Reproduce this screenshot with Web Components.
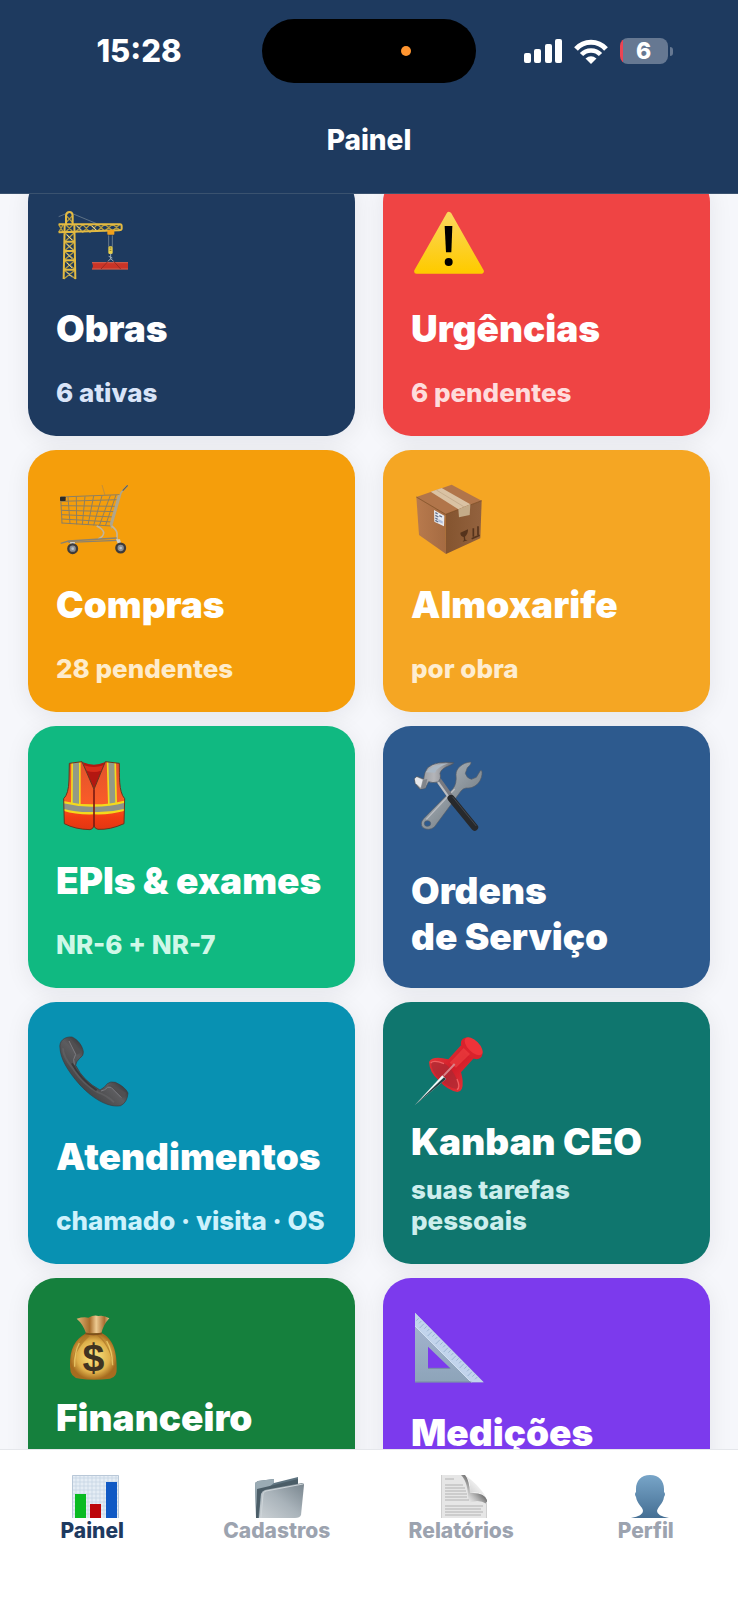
<!DOCTYPE html>
<html lang="pt-BR">
<head>
<meta charset="UTF-8">
<meta name="viewport" content="width=device-width, initial-scale=1">
<title>Painel</title>
<style>
    body {
        margin: 0;
        font-family: Inter, "Liberation Sans", sans-serif;
    }
</style>
</head>
<body>
<painel-app>
    <status-bar slot="header" time="15:28" battery="6"></status-bar>
    <app-title slot="header">Painel</app-title>

    <menu-card href="#obras" icon="crane" color="#1e3a5f" sub-color="#d9e4f8">Obras<span slot="sub">6 ativas</span></menu-card>
    <menu-card href="#urgencias" icon="warning" color="#ef4444" sub-color="#fedcdc">Urgências<span slot="sub">6 pendentes</span></menu-card>
    <menu-card href="#compras" icon="cart" color="#f59e0b" sub-color="#feeccb">Compras<span slot="sub">28 pendentes</span></menu-card>
    <menu-card href="#almoxarife" icon="box" color="#f5a623" sub-color="#feedd0">Almoxarife<span slot="sub">por obra</span></menu-card>
    <menu-card href="#epis" icon="vest" color="#10b981" sub-color="#cff8e8">EPIs &amp; exames<span slot="sub">NR-6 + NR-7</span></menu-card>
    <menu-card href="#ordens" icon="tools" color="#2d5a8e" lines="0">Ordens<br>de Serviço</menu-card>
    <menu-card href="#atendimentos" icon="phone" color="#0891b2" sub-color="#cdf2fc">Atendimentos<span slot="sub">chamado · visita · OS</span></menu-card>
    <menu-card href="#kanban" icon="pin" color="#0f766e" sub-color="#cdeeed">Kanban CEO<span slot="sub">suas tarefas pessoais</span></menu-card>
    <menu-card href="#financeiro" icon="money" color="#15803d" lines="2">Financeiro</menu-card>
    <menu-card href="#medicoes" icon="ruler" color="#7c3aed">Medições</menu-card>

    <tab-item slot="tabs" href="#painel" icon="chart" active>Painel</tab-item>
    <tab-item slot="tabs" href="#cadastros" icon="folder">Cadastros</tab-item>
    <tab-item slot="tabs" href="#relatorios" icon="page">Relatórios</tab-item>
    <tab-item slot="tabs" href="#perfil" icon="person">Perfil</tab-item>
</painel-app>

<script>
// Desenhos dos ícones, cada um com o seu viewBox
const ICONS = {
    crane: {
        box: '108 36 228 237',
        art: `
            <g fill="none" stroke="#7d8d97" stroke-width="2"><path d="M148 67L116 80M148 67L230 101"/></g>
            <g fill="none" stroke="#b79d3d" stroke-width="4">
                <path d="M138 76L158 98M158 76L138 98M134 128L163 155M163 128L134 155M133 155L164 183M164 155L133 183M132 183L165 211M165 183L132 211M132 211L166 239M166 211L132 239M131 239L167 267M167 239L131 267"/>
                <path d="M116 103L130 127M130 103L116 127M166 103L188 127M188 103L166 127M188 103L210 127M210 103L188 127M210 103L232 124M232 103L210 127M232 103L254 123M254 103L232 124M254 103L278 122M278 103L254 123M278 103L300 121M300 103L278 122M136 103L160 127M160 103L136 127"/>
            </g>
            <g fill="none" stroke="#e3ba42" stroke-width="6">
                <path d="M116 103H300Q305 103 305 109V117Q304 121 298 121L116 127M138 103V76Q140 66 148 66Q157 66 158 76V103M134 103L131 267M163 103L166 267M134 155H164M133 183H165M133 211H165M132 239H166"/>
            </g>
            <g fill="none" stroke="#edeadb" stroke-width="2"><path d="M141 135L156 150M141 163L156 178M141 191L156 206M141 219L156 234M141 247L156 262M172 108L184 120M216 108L228 120"/></g>
            <rect x="262" y="120" width="21" height="14" rx="2" fill="#f0a01c"/>
            <path d="M266 136V170M277 136V170" stroke="#8d99a0" stroke-width="2"/>
            <rect x="265" y="169" width="13" height="23" rx="4" fill="#e9d04c"/>
            <path d="M269 174h5M269 181h5" stroke="#857326" stroke-width="3"/>
            <path d="M272 191V208M266 199L277 204M264 214L272 206L281 214" stroke="#9aa9b5" stroke-width="3" fill="none"/>
            <path d="M216 217H324V238H216L219 228Z" fill="#ca3427"/>
            <path d="M216 218H324M216 237H324" stroke="#d0604f" stroke-width="3"/>
            <path d="M264 214L243 237M281 214L302 237" stroke="#982b22" stroke-width="3"/>`
    },
    warning: {
        box: '108 36 228 237',
        art: `
            <defs><linearGradient id="g" x1="0" y1="0" x2="0" y2="1"><stop offset="0" stop-color="#fbd65b"/><stop offset="1" stop-color="#fecb00"/></linearGradient></defs>
            <path d="M222 73L319 244H125Z" fill="url(#g)" stroke="url(#g)" stroke-width="15" stroke-linejoin="round"/>
            <path d="M209 108H232L229 187H213Z"/><circle cx="221" cy="216" r="12"/>`
    },
    cart: {
        box: '108 99 228 237',
        art: `
            <g fill="none" stroke="#8c7f62" stroke-width="3">
                <path d="M122 156L299 149M123 169L296 164M123 182L293 184M124 196L288 200M124 209L283 216M125 222L279 231M125 234L275 243"/>
                <path d="M122 156L126 235M144 156L150 236M169 155L170 238M195 154L187 239M221 153L204 240M246 152L221 241M271 151L238 242M288 150L256 243"/>
            </g>
            <path d="M246 120L255 151" stroke="#aa8750" stroke-width="2"/>
            <path d="M322 122L303 143L274 244L272 236L296 150" fill="none" stroke="#b0a68c" stroke-width="5"/>
            <path d="M323 121L308 137" stroke="#6b6252" stroke-width="4"/>
            <rect x="120" y="155" width="17" height="13" rx="2" fill="#2c2a27"/>
            <path d="M230 243Q247 250 251 262Q252 274 234 282M275 243Q290 254 291 265V286" fill="none" stroke="#c2b59d" stroke-width="5"/>
            <path d="M122 295L146 288L290 279M145 292L292 286" fill="none" stroke="#8b8270" stroke-width="4"/>
            <path d="M150 291L165 291L162 310H154ZM288 283H300L307 308H298Z" fill="#d2cec4"/>
            <g fill="#8c9095" stroke="#3e3b3a" stroke-width="7"><circle cx="158" cy="311" r="13"/><circle cx="302" cy="309" r="13"/></g>
            <g fill="#bbc2c7"><circle cx="158" cy="311" r="4"/><circle cx="302" cy="309" r="4"/></g>`
    },
    box: {
        box: '108 99 228 237',
        art: `
            <defs>
                <linearGradient id="l"><stop offset="0" stop-color="#b87a4d"/><stop offset="1" stop-color="#a56b42"/></linearGradient>
                <linearGradient id="r"><stop offset="0" stop-color="#84542f"/><stop offset="1" stop-color="#93623e"/></linearGradient>
            </defs>
            <path d="M124 156L230 119L320 167L212 208Z" fill="#b1754a"/>
            <path d="M124 156L212 208L213 327L132 270Z" fill="url(#l)"/>
            <path d="M212 208L320 167L316 280L213 327Z" fill="url(#r)"/>
            <path d="M124 156L212 208L320 167" fill="none" stroke="#6e4528" stroke-width="2"/>
            <path d="M167 140L200 129L286 178L250 193Z" fill="#dac2a3"/>
            <path d="M184 135L268 186" stroke="#bda384" stroke-width="2"/>
            <path d="M250 193L286 178L284 210L252 217Z" fill="#c4ab88"/>
            <path d="M177 195L208 212L207 244L178 230Z" fill="#e7eaef"/>
            <path d="M181 203L188 207M181 211L190 216M181 219L188 223M181 226L190 231M193 212L201 216" stroke="#64708a" stroke-width="4"/>
            <path d="M190 222L203 229V236L190 230Z" fill="#afbdd8"/>
            <path d="M256 263L279 253Q280 266 270 275L271 284L278 286L263 290L267 285L266 276Q256 274 256 263Z" fill="#55331c"/>
            <path d="M290 281L314 271M295 250V275M309 244V270" stroke="#55331c" stroke-width="5"/>`
    },
    vest: {
        box: '108 102 228 237',
        art: `
            <defs>
                <linearGradient id="g" x1="0" y1="0" x2="0" y2="1"><stop offset="0" stop-color="#e0522c"/><stop offset=".6" stop-color="#fa5c28"/><stop offset=".8" stop-color="#f23c12"/><stop offset="1" stop-color="#df3513"/></linearGradient>
                <clipPath id="c"><path d="M148 130L186 125L222 208L256 125L298 130C299 165 295 215 314 236L312 311Q270 330 234 328Q225 327 222 317Q219 328 210 329Q165 328 133 311L131 236Q146 222 147 180Z"/></clipPath>
            </defs>
            <path d="M188 126Q222 142 255 126L222 212Z" fill="#b31711"/>
            <path d="M192 136Q222 146 250 136L243 152Q222 160 200 152Z" fill="#d72c1b"/>
            <g clip-path="url(#c)">
                <path d="M125 120H320V335H125Z" fill="url(#g)"/>
                <path d="M154 120H182V252H153ZM260 120H288L291 252H264Z" fill="#f3db1e"/>
                <path d="M159 120H177V252H158ZM265 120H283L286 252H269Z" fill="#929a87"/>
                <path d="M130 243Q175 254 222 253Q270 253 316 241V272Q270 285 222 283Q170 285 130 272Z" fill="#f4d91c"/>
                <path d="M130 250Q175 261 222 260Q270 260 316 248V266Q270 278 222 276Q170 278 130 266Z" fill="#8d9389"/>
                <path d="M222 208V329" stroke="#7e1c13" stroke-width="5"/>
            </g>
            <path d="M148 130L186 125L222 208L256 125L298 130C299 165 295 215 314 236L312 311Q270 330 234 328Q225 327 222 317Q219 328 210 329Q165 328 133 311L131 236Q146 222 147 180Z" fill="none" stroke="#68351d" stroke-width="3"/>`
    },
    tools: {
        box: '108 102 228 237',
        art: `
            <defs>
                <linearGradient id="m" x1="0" y1="0" x2="1" y2="1"><stop offset="0" stop-color="#bcc1c6"/><stop offset=".5" stop-color="#8e979e"/><stop offset="1" stop-color="#606870"/></linearGradient>
                <linearGradient id="h" x1="0" y1="0" x2="1" y2="0"><stop offset="0" stop-color="#878b91"/><stop offset=".5" stop-color="#b4b5b9"/><stop offset="1" stop-color="#6c7078"/></linearGradient>
            </defs>
            <path fill-rule="evenodd" d="M243 164C243 145 262 128 287 126Q292 130 277 143L271 160Q274 174 289 178L304 172L316 152Q322 148 321 163C318 190 296 207 273 204Q264 205 258 213L178 321Q162 334 144 323Q133 310 146 296L234 206Q246 190 243 164ZM148 311A9 8 0 1 0 167 310A9 8 0 1 0 148 311Z" fill="url(#m)" stroke="#555c66" stroke-width="2"/>
            <path d="M239 207L154 298" stroke="#bcbec3" stroke-width="4"/>
            <path d="M189 178L230 235" stroke="#777980" stroke-width="17"/>
            <path d="M186 182L224 236" stroke="#bcbfc4" stroke-width="6"/>
            <path d="M228 235L299 322" stroke="#27292c" stroke-width="21" stroke-linecap="round"/>
            <path d="M233 231L303 317" stroke="#44474c" stroke-width="3" stroke-linecap="round"/>
            <path d="M118 176L126 169L146 177Q147 158 158 143Q184 122 236 128Q237 132 222 137Q198 146 195 160Q200 178 188 186Q172 190 161 185L151 205L135 208L120 190Z" fill="url(#h)" stroke="#4c535d" stroke-width="2"/>
            <path d="M119 176L125 171L143 179L137 203L122 190Z" fill="#e5e7eb"/>
            <path d="M151 157Q177 132 220 130Q187 141 180 158Z" fill="#aab7c4"/>
            <path d="M145 179L157 177L151 204L138 207Z" fill="#80848a"/>`
    },
    phone: {
        box: '108 105 228 237',
        art: `
            <defs><linearGradient id="g" x1="0" y1="1" x2="1" y2="0"><stop offset=".3" stop-color="#464648"/><stop offset=".5" stop-color="#5c5c5f"/><stop offset=".65" stop-color="#343436"/></linearGradient></defs>
            <path d="M120 160C116 138 134 124 156 126C174 134 187 152 190 170Q192 182 178 191Q168 200 167 211Q190 258 240 285Q254 278 262 266Q271 258 286 262Q316 276 324 294Q322 322 302 332C270 338 225 318 180 270C140 225 122 190 120 160Z" fill="url(#g)" stroke="#3c3b3d" stroke-width="2"/>
            <path d="M151 132Q170 145 181 172L170 180L147 138Z" fill="#504f51"/>
            <path d="M147 138L167 178Q157 193 163 209" fill="none" stroke="#7b7b80" stroke-width="3"/>
            <path d="M263 270Q280 268 318 293Q315 306 306 308L274 276Z" fill="#504f51"/>
            <path d="M243 288Q255 286 263 277L273 277L304 308" fill="none" stroke="#7b7b80" stroke-width="3"/>
            <path d="M129 160Q128 184 159 221Q190 268 234 292Q262 302 282 322" fill="none" stroke="#69696b" stroke-width="6" opacity=".5"/>
            <path d="M156 205Q180 252 230 286" fill="none" stroke="#29292b" stroke-width="6" opacity=".6"/>`
    },
    pin: {
        box: '108 105 228 237',
        art: `
            <defs><linearGradient id="g" x1="0" y1="0" x2="1" y2="1"><stop offset="0" stop-color="#e93e3f"/><stop offset=".5" stop-color="#d21d29"/><stop offset="1" stop-color="#ea363a"/></linearGradient></defs>
            <path d="M258 151L220 193Q172 181 162 201Q163 231 190 255Q216 285 247 291Q265 291 263 257Q260 238 258 232L299 187Z" fill="url(#g)"/>
            <ellipse cx="290" cy="160" rx="39" ry="24" transform="rotate(45 290 160)" fill="#d9222c"/>
            <ellipse cx="296" cy="154" rx="34" ry="17" transform="rotate(45 296 154)" fill="#ee3339"/>
            <path d="M266 159L224 203L243 218L285 177Z" fill="#f04343" opacity=".6"/>
            <path d="M168 203Q181 194 207 205Q230 217 247 256Q252 274 244 282Q218 278 192 249Q169 228 168 203Z" fill="#a22c35" opacity=".6"/>
            <path d="M167 204Q176 193 207 206M246 252Q257 278 246 284" stroke="#ee5f61" stroke-width="4" fill="none"/>
            <path d="M239 207L206 242" stroke="#d98389" stroke-width="6"/>
            <path d="M202 241L119 331L213 252Z" fill="#eff8f7"/>
            <path d="M119 331L213 252L207 247Z" fill="#263d40"/>`
    },
    money: {
        box: '108 108 228 237',
        art: `
            <defs>
                <radialGradient id="g"><stop offset=".2" stop-color="#f4d873"/><stop offset=".7" stop-color="#dfb04a"/><stop offset="1" stop-color="#a66c1f"/></radialGradient>
                <linearGradient id="n"><stop offset="0" stop-color="#dfb778"/><stop offset=".4" stop-color="#a86d2b"/><stop offset=".6" stop-color="#edca91"/><stop offset=".85" stop-color="#a96e32"/><stop offset="1" stop-color="#e6c38a"/></linearGradient>
            </defs>
            <path d="M170 146Q190 140 205 143Q222 134 235 138Q251 134 268 145Q250 164 244 190H198Q190 163 170 146Z" fill="url(#n)"/>
            <path d="M198 190C165 209 149 235 150 290Q150 324 180 326Q220 332 270 326Q292 322 290 294C291 235 274 205 246 190Z" fill="url(#g)"/>
            <path d="M201 192Q165 218 158 274Q174 230 209 199M237 195Q276 231 281 290Q267 221 228 194" fill="#a77223" opacity=".6"/>
            <path d="M178 219Q163 246 164 290M260 213Q277 242 278 286" fill="none" stroke="#f5d773" stroke-width="4" opacity=".7"/>
            <path d="M196 190Q220 196 246 190" stroke="#80501c" stroke-width="5" fill="none"/>
            <text x="220" y="304" text-anchor="middle" font-family="Liberation Sans, sans-serif" font-size="118" font-weight="700" fill="#403321">$</text>`
    },
    ruler: {
        box: '108 108 228 237',
        art: `
            <defs><linearGradient id="g" x1="0" y1="0" x2="0" y2="1"><stop offset="0" stop-color="#a7b6d2"/><stop offset="1" stop-color="#8da4b9"/></linearGradient></defs>
            <path fill-rule="evenodd" d="M120 128V337H326ZM159 230V295H226Z" fill="url(#g)"/>
            <path d="M120 128V168L289 337H326Z" fill="#c2d4ec"/>
            <path d="M120 168L289 337" stroke="#d2e0f1" stroke-width="3"/>
            <path d="M159 295H226M120 336H289" stroke="#778ba5" stroke-width="3"/>
            <path d="M131 145l-7 7M139 153l-7 7M147 161l-13 13M155 169l-7 7M163 177l-7 7M171 185l-13 13M179 193l-7 7M187 201l-7 7M195 209l-13 13M203 217l-7 7M211 225l-7 7M219 233l-13 13M227 241l-7 7M235 249l-7 7M243 257l-13 13M251 265l-7 7M259 273l-7 7M267 281l-13 13M275 289l-7 7M283 297l-7 7M291 305l-13 13M299 313l-7 7M307 321l-7 7" stroke="#88a4c4" stroke-width="2"/>`
    },
    chart: {
        box: '0 0 60 43',
        art: `
            <rect x="10" width="47" height="43" fill="#e5edf5"/>
            <path d="M10 3h47M10 7h47M10 11h47M10 15h47M10 19h47M10 23h47M10 27h47M10 31h47M10 35h47M10 39h47M14 0v43M18 0v43M22 0v43M26 0v43M30 0v43M34 0v43M38 0v43M42 0v43M46 0v43M50 0v43M54 0v43" stroke="#c3d3e3" stroke-width=".7"/>
            <path d="M10.500 43V.5H56.500V43" fill="none" stroke="#b9c8d8"/>
            <rect x="13" y="19" width="11" height="24" fill="#0abb22"/>
            <rect x="28" y="29" width="11" height="14" fill="#bd0609"/>
            <rect x="44" y="7" width="11" height="36" fill="#1059c4"/>`
    },
    folder: {
        box: '0 0 60 43',
        art: `
            <defs><linearGradient id="g" x1="0" y1="1" x2="1" y2="0"><stop offset="0" stop-color="#cbd1d5"/><stop offset=".5" stop-color="#a9b3ba"/><stop offset="1" stop-color="#77848d"/></linearGradient></defs>
            <path d="M8 8L11 6L27 4V8L51 2V11L16 43H9Z" fill="#5f7480"/>
            <path d="M8 8L11 6L27 4V8L22 12L12 16L9 33Z" fill="#9aabb4"/>
            <path d="M10 14L27 10L51 4V10L14 18L11 43H9Z" fill="#4b5d67"/>
            <path d="M14 19Q15 16 18 15L55 8Q57 8 57 10L54 40Q53 43 48 43H12Z" fill="url(#g)"/>
            <path d="M14 43L16 19Q16 17 19 16L56 9" fill="none" stroke="#ced5d9" stroke-width="1"/>`
    },
    page: {
        box: '0 0 60 43',
        art: `
            <defs>
                <linearGradient id="g" x1="0" y1="1" x2="1" y2="0"><stop offset=".2" stop-color="#858585" stop-opacity="0"/><stop offset=".7" stop-color="#3a3a3a"/></linearGradient>
                <linearGradient id="w" x1="0" y1="1" x2="1" y2="0"><stop offset="0" stop-color="#c4c4c4"/><stop offset=".6" stop-color="#f2f2f2"/></linearGradient>
            </defs>
            <path d="M10 0H33Q38 4 40 18Q54 17 56 25V43H10Z" fill="#e6e6e6"/>
            <path d="M14 4h9M14 10h18M14 13h20M14 16h21M14 19h22M14 22h22M14 25h24M14 31h38M14 34h36M14 37h38M14 40h36" stroke="#b2b2b2" stroke-width="1"/>
            <path d="M30 0H34Q38 4 39 18Q53 17 56 25V29Q46 23 37 29Q38 8 30 0Z" fill="url(#g)"/>
            <path d="M35 1Q47 9 55 22Q49 16 39 18Q40 7 35 1Z" fill="url(#w)"/>
            <path d="M10.500 0V43M55.500 27V43" stroke="#cfcfcf"/>`
    },
    person: {
        box: '0 0 60 43',
        art: `
            <defs><linearGradient id="g" x1="0" y1="0" x2="0" y2="1"><stop offset="0" stop-color="#78a5c8"/><stop offset="1" stop-color="#456f94"/></linearGradient></defs>
            <path d="M34 0C25 0 20 6 20 14V17Q18 19 20 22C21 29 27 32 27 36Q27 41 15 43H53Q41 41 41 36C42 31 47 29 48 22Q50 19 48 17V14C48 6 43 0 34 0Z" fill="url(#g)"/>`
    }
};

// Ícone em SVG
class AppIcon extends HTMLElement {
    connectedCallback() {
        const icon = ICONS[this.getAttribute('name')];
        if (this.shadowRoot) return;
        this.attachShadow({ mode: 'open' }).innerHTML = `
            <style>
                :host { display: block; width: 76px; height: 79px; }
                svg { display: block; width: 100%; height: 100%; }
            </style>
            <svg viewBox="${icon.box}" aria-hidden="true">${icon.art}</svg>
        `;
    }
}

// Barra de status: hora, sinal, wi-fi e bateria
class StatusBar extends HTMLElement {
    connectedCallback() {
        this.attachShadow({ mode: 'open' }).innerHTML = `
            <style>
                :host {
                    display: grid;
                    grid-template-columns: 1fr 214px 1fr;
                    align-items: center;
                    padding: 19px 0 0;
                    color: white;
                }
                .time {
                    font-size: 31px;
                    font-weight: 800;
                    line-height: 36px;
                    text-align: center;
                    padding-left: 16px;
                }
                .island {
                    box-sizing: border-box;
                    display: flex;
                    align-items: center;
                    justify-content: flex-end;
                    height: 64px;
                    padding-right: 65px;
                    border-radius: 32px;
                    background: black;
                }
                .dot {
                    width: 10px;
                    height: 10px;
                    border-radius: 50%;
                    background: #ff9530;
                }
                .status {
                    display: flex;
                    align-items: center;
                    justify-content: center;
                    gap: 12px;
                    padding-right: 18px;
                }
                svg { display: block; }
                .battery { display: flex; align-items: center; gap: 2px; }
                .cell {
                    width: 48px;
                    height: 26px;
                    border-radius: 8px;
                    background: linear-gradient(90deg, #eb4453 3px, #667892 3px);
                    font-size: 23px;
                    font-weight: 800;
                    line-height: 26px;
                    text-align: center;
                }
                .tip { width: 3px; height: 9px; border-radius: 0 3px 3px 0; background: #667892; }
            </style>
            <div class="time">${this.getAttribute('time')}</div>
            <div class="island"><div class="dot"></div></div>
            <div class="status">
                <svg width="38" height="24" viewBox="0 0 38 24" fill="white" aria-hidden="true">
                    <rect y="14" width="7" height="10" rx="2"/>
                    <rect x="10" y="10" width="7" height="14" rx="2"/>
                    <rect x="21" y="5" width="7" height="19" rx="2"/>
                    <rect x="31" width="7" height="24" rx="2"/>
                </svg>
                <svg width="34" height="25" viewBox="0 0 34 25" fill="none" stroke="white" aria-hidden="true">
                    <path d="M2 10C10 1 24 1 32 10" stroke-width="5"/>
                    <path d="M7.500 15.500C12.500 10 21.500 10 26.500 15.500" stroke-width="4.500"/>
                    <path d="M11.500 19.500Q17 15 22.500 19.500L17 25Z" fill="white" stroke="none"/>
                </svg>
                <div class="battery">
                    <div class="cell">${this.getAttribute('battery')}</div>
                    <div class="tip"></div>
                </div>
            </div>
        `;
    }
}

class AppTitle extends HTMLElement {
    connectedCallback() {
        this.attachShadow({ mode: 'open' }).innerHTML = `
            <style>
                :host { display: block; padding: 40px 0 35px; }
                h1 {
                    margin: 0;
                    color: white;
                    font-size: 28px;
                    font-weight: 800;
                    line-height: 35px;
                    text-align: center;
                }
            </style>
            <h1><slot></slot></h1>
        `;
    }
}

// Card do menu; "lines" reserva as linhas do subtítulo
class MenuCard extends HTMLElement {
    connectedCallback() {
        const lines = this.getAttribute('lines') || 1;
        this.attachShadow({ mode: 'open' }).innerHTML = `
            <style>
                :host { display: block; min-width: 0; }
                a {
                    box-sizing: border-box;
                    display: flex;
                    flex-direction: column;
                    justify-content: space-between;
                    height: 262px;
                    padding: 28px;
                    border-radius: 28px;
                    background: ${this.getAttribute('color')};
                    box-shadow: 0 4px 24px rgba(15, 23, 42, 0.08);
                    color: white;
                    text-decoration: none;
                }
                .title {
                    font-size: 37px;
                    font-weight: 900;
                    line-height: 46px;
                    white-space: nowrap;
                }
                .sub {
                    min-height: calc(31px * ${lines});
                    color: ${this.getAttribute('sub-color') || 'white'};
                    font-size: 26px;
                    font-weight: 800;
                    line-height: 31px;
                }
            </style>
            <a href="${this.getAttribute('href')}">
                <app-icon name="${this.getAttribute('icon')}"></app-icon>
                <div class="title"><slot></slot></div>
                ${lines === '0' ? '' : '<div class="sub"><slot name="sub"></slot></div>'}
            </a>
        `;
    }
}

class TabItem extends HTMLElement {
    connectedCallback() {
        this.attachShadow({ mode: 'open' }).innerHTML = `
            <style>
                :host { display: block; flex: 1; }
                a {
                    display: flex;
                    flex-direction: column;
                    align-items: center;
                    color: #9ca3af;
                    font-size: 21px;
                    font-weight: 800;
                    line-height: 25px;
                    text-decoration: none;
                }
                :host([active]) a { color: #1e3a5f; }
                app-icon { width: 60px; height: 43px; }
            </style>
            <a href="${this.getAttribute('href')}">
                <app-icon name="${this.getAttribute('icon')}"></app-icon>
                <slot></slot>
            </a>
        `;
    }
}

class PainelApp extends HTMLElement {
    connectedCallback() {
        this.attachShadow({ mode: 'open' }).innerHTML = `
            <style>
                :host {
                    display: flex;
                    flex-direction: column;
                    height: 100vh;
                    background: #f6f7fb;
                }
                header {
                    background: #1e3a5f;
                    border-bottom: 1px solid #3a526f;
                }
                main {
                    flex: 1;
                    min-height: 0;
                    overflow: hidden;
                }
                .grid {
                    display: grid;
                    grid-template-columns: 1fr 1fr;
                    gap: 14px 28px;
                    margin-top: -20px;
                    padding: 0 28px;
                }
                nav {
                    display: flex;
                    padding: 25px 0 57px;
                    border-top: 1px solid #e5e7eb;
                    background: white;
                }
            </style>
            <header><slot name="header"></slot></header>
            <main><div class="grid"><slot></slot></div></main>
            <nav><slot name="tabs"></slot></nav>
        `;
    }
}

customElements.define('app-icon', AppIcon);
customElements.define('status-bar', StatusBar);
customElements.define('app-title', AppTitle);
customElements.define('menu-card', MenuCard);
customElements.define('tab-item', TabItem);
customElements.define('painel-app', PainelApp);
</script>
</body>
</html>
